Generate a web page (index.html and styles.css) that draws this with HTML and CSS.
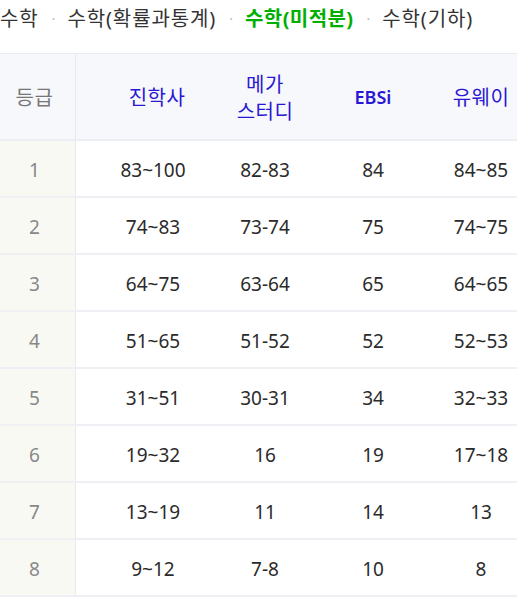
FILE: index.html
```html
<!DOCTYPE html>
<html lang="ko">
<head>
<meta charset="utf-8">
<link rel="stylesheet" href="styles.css">
</head>
<body>
<div class="page">
  <nav class="tabs">
    <span class="tab">수학</span><span class="sep">·</span>
    <span class="tab">수학(확률과통계)</span><span class="sep">·</span>
    <span class="tab active">수학(미적분)</span><span class="sep">·</span>
    <span class="tab">수학(기하)</span>
  </nav>
  <div class="table">
    <div class="row head">
      <div class="c grade">등급</div>
      <div class="c first">진학사</div>
      <div class="c">메가<br>스터디</div>
      <div class="c ebs">EBSi</div>
      <div class="c">유웨이</div>
    </div>
    <div class="row"><div class="c grade">1</div><div class="c first">83~100</div><div class="c">82-83</div><div class="c">84</div><div class="c">84~85</div></div>
    <div class="row"><div class="c grade">2</div><div class="c first">74~83</div><div class="c">73-74</div><div class="c">75</div><div class="c">74~75</div></div>
    <div class="row"><div class="c grade">3</div><div class="c first">64~75</div><div class="c">63-64</div><div class="c">65</div><div class="c">64~65</div></div>
    <div class="row"><div class="c grade">4</div><div class="c first">51~65</div><div class="c">51-52</div><div class="c">52</div><div class="c">52~53</div></div>
    <div class="row"><div class="c grade">5</div><div class="c first">31~51</div><div class="c">30-31</div><div class="c">34</div><div class="c">32~33</div></div>
    <div class="row"><div class="c grade">6</div><div class="c first">19~32</div><div class="c">16</div><div class="c">19</div><div class="c">17~18</div></div>
    <div class="row"><div class="c grade">7</div><div class="c first">13~19</div><div class="c">11</div><div class="c">14</div><div class="c">13</div></div>
    <div class="row"><div class="c grade">8</div><div class="c first">9~12</div><div class="c">7-8</div><div class="c">10</div><div class="c">8</div></div>
  </div>
</div>
</body>
</html>
```
FILE: styles.css
```css
html, body {
  margin: 0;
  padding: 0;
  background: #fff;
  overflow: hidden;
}
.page {
  width: 517px;
  overflow: hidden;
  font-family: "Noto Sans", "Noto Sans CJK KR", sans-serif;
}
.tabs {
  height: 53px;
  display: flex;
  align-items: flex-start;
  padding-top: 4px;
  box-sizing: border-box;
  white-space: nowrap;
  font-size: 20px;
  line-height: 30px;
  color: #333;
}
.tab { letter-spacing: 0.9px; }
.tab.active {
  color: #00b000;
  font-weight: 700;
  letter-spacing: 0.4px;
}
.sep {
  color: #bbb;
  font-size: 14px;
  margin: 0 12px 0 13px;
}
.table {
  width: 535px;
  border-top: 1px solid #e8ebf0;
}
.row {
  display: grid;
  grid-template-columns: 76px 135px 108px 108px 108px;
  height: 57px;
  border-bottom: 2px solid #eef0f4;
  box-sizing: border-box;
}
.row.head {
  height: 87px;
  background: #f7f8fb;
  border-bottom: 2px solid #eceef3;
}
.c {
  display: flex;
  align-items: center;
  justify-content: center;
  text-align: center;
  font-size: 19px;
  color: #2b2b2b;
  padding-top: 3px;
}
.c.first { padding-left: 19px; }
.grade {
  background: #f9f9f4;
  border-right: 1px solid #e6e9ef;
  color: #888;
  padding-right: 6px;
}
.head .c {
  color: #2a17d4;
  font-size: 20px;
  line-height: 27px;
  padding-top: 2px;
  letter-spacing: 0.5px;
}
.head .c.first { padding-left: 27px; }
.head .c.ebs { font-size: 18px; font-weight: 600; letter-spacing: 0; }
.head .grade {
  background: transparent;
  color: #777;
}
```
